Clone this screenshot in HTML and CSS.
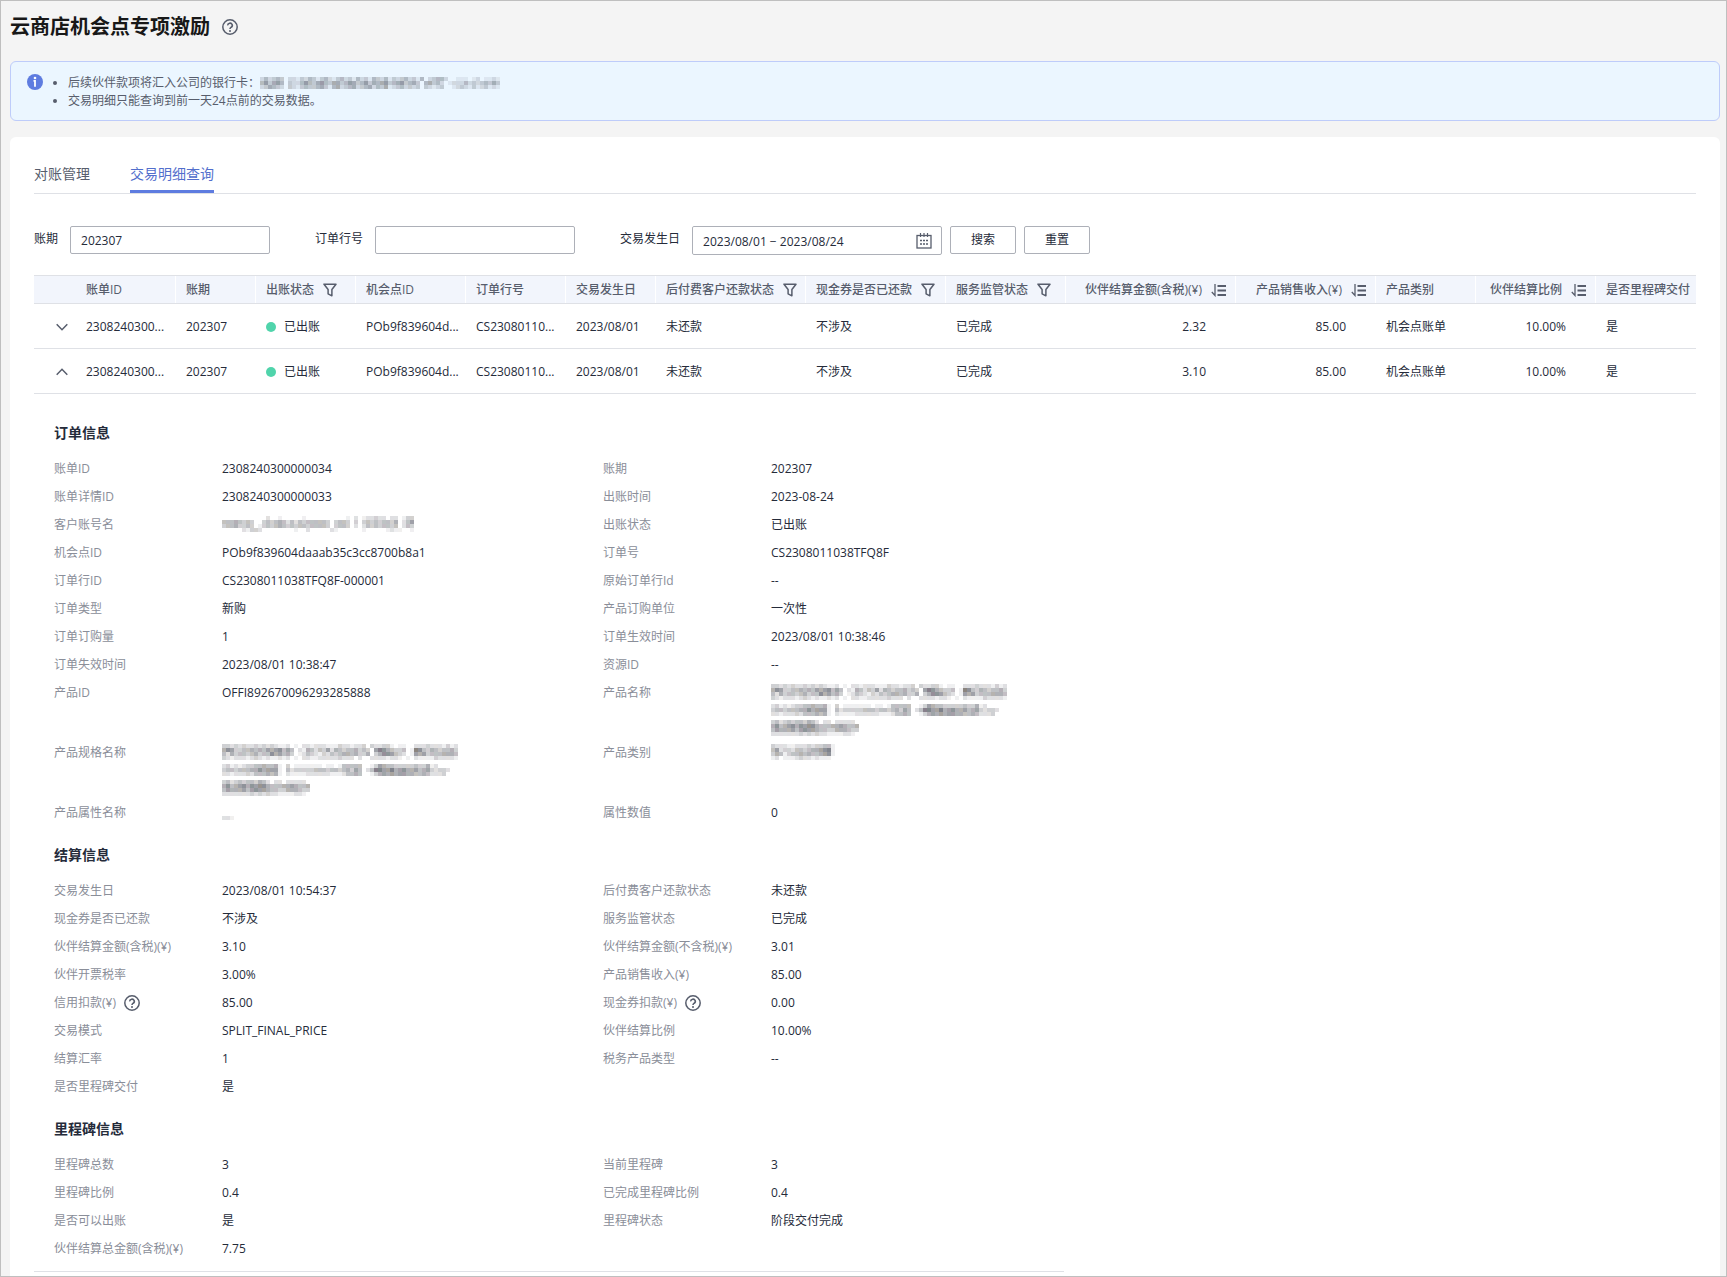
FILE: index.html
```html
<!DOCTYPE html>
<html lang="zh-CN">
<head>
<meta charset="utf-8">
<meta name="viewport" content="width=device-width, initial-scale=1">
<title>云商店机会点专项激励</title>
<link rel="stylesheet" href="styles.css">
</head>
<body>
<svg class="sprite" aria-hidden="true">
  <symbol id="i-help" viewBox="0 0 16 16"><circle cx="8" cy="8" r="7.2" fill="none" stroke="currentColor" stroke-width="1.5"/><path d="M5.7 6.400a2.300 2.200 0 1 1 3.500 1.800C8.300 8.800 8 9.100 8 10" fill="none" stroke="currentColor" stroke-width="1.600"/><circle cx="8" cy="12" r="1" fill="currentColor"/></symbol>
  <symbol id="i-filter" viewBox="0 0 14 14"><path d="M1 1.200h12L8.900 6.500v6.300L5.100 10.800V6.500z" fill="none" stroke="currentColor" stroke-width="1.500" stroke-linejoin="round"/></symbol>
  <symbol id="i-sort" viewBox="0 0 15 14"><path d="M4 1v11.500L.8 9" fill="none" stroke="currentColor" stroke-width="1.300"/><path d="M6.500 3H15M6.500 7.500H15M6.500 12H15" fill="none" stroke="currentColor" stroke-width="1.800"/></symbol>
  <symbol id="i-down" viewBox="0 0 12 12"><path d="M.7 3.200 6 8.700l5.300-5.500" fill="none" stroke="currentColor" stroke-width="1.500"/></symbol>
  <symbol id="i-up" viewBox="0 0 12 12"><path d="M.7 8.800 6 3.300l5.300 5.500" fill="none" stroke="currentColor" stroke-width="1.500"/></symbol>
</svg>
<main class="page">
  <header class="page-head">
    <h1>云商店机会点专项激励</h1>
    <button class="icon-btn" type="button" aria-label="帮助"><svg class="i16"><use href="#i-help"/></svg></button>
  </header>

  <section class="notice">
    <svg class="i16 notice-icon" viewBox="0 0 16 16"><circle cx="8" cy="8" r="8" fill="#5e7ce0"/><circle cx="8" cy="4" r="1.300" fill="#fff"/><path d="M6.500 6.800H8V12.800" fill="none" stroke="#fff" stroke-width="1.800"/></svg>
    <ul>
      <li>后续伙伴款项将汇入公司的银行卡：<svg class="mosaic" data-map="bank"></svg></li>
      <li>交易明细只能查询到前一天24点前的交易数据。</li>
    </ul>
  </section>

  <section class="card">
    <nav class="tabs">
      <a href="#reconcile">对账管理</a>
      <a href="#detail" class="active">交易明细查询</a>
    </nav>

    <form class="filters">
      <div class="field"><label for="period">账期</label><input id="period" type="text" value="202307"></div>
      <div class="field"><label for="line">订单行号</label><input id="line" type="text"></div>
      <div class="field"><label for="date">交易发生日</label>
        <div class="date-box"><input id="date" type="text" value="2023/08/01 − 2023/08/24">
          <svg class="i16" viewBox="0 0 16 16"><rect x="1" y="2.500" width="14" height="12.500" fill="none" stroke="currentColor" stroke-width="1.300"/><path d="M4.500 0v4M8 0v4M11.500 0v4" stroke="currentColor" stroke-width="1.200"/><path d="M4 7.500h2m1 0h2m1 0h2M4 11h2m1 0h2m1 0h2" stroke="currentColor" stroke-width="1.700"/></svg>
        </div>
      </div>
      <div class="actions"><button class="btn" type="button">搜索</button><button class="btn" type="button">重置</button></div>
    </form>

    <table class="bills">
      <colgroup><col class="c42"><col class="c100"><col class="c80"><col class="c100"><col class="c110"><col class="c100"><col class="c90"><col class="c150"><col class="c140"><col class="c120"><col class="c170"><col class="c140"><col class="c100"><col class="c120"><col class="c100"></colgroup>
      <thead>
        <tr>
          <td class="blank"></td>
          <th>账单ID</th><th>账期</th>
          <th><span>出账状态</span><svg class="i14"><use href="#i-filter"/></svg></th>
          <th>机会点ID</th><th>订单行号</th><th>交易发生日</th>
          <th><span>后付费客户还款状态</span><svg class="i14"><use href="#i-filter"/></svg></th>
          <th><span>现金券是否已还款</span><svg class="i14"><use href="#i-filter"/></svg></th>
          <th><span>服务监管状态</span><svg class="i14"><use href="#i-filter"/></svg></th>
          <th class="num"><span>伙伴结算金额(含税)(¥)</span><svg class="i15"><use href="#i-sort"/></svg></th>
          <th class="num"><span>产品销售收入(¥)</span><svg class="i15"><use href="#i-sort"/></svg></th>
          <th>产品类别</th>
          <th class="num"><span>伙伴结算比例</span><svg class="i15"><use href="#i-sort"/></svg></th>
          <th>是否里程碑交付</th>
        </tr>
      </thead>
      <tbody>
        <tr class="row">
          <td class="toggle"><button class="icon-btn" type="button" aria-label="展开"><svg class="i12"><use href="#i-down"/></svg></button></td>
          <td>2308240300...</td><td>202307</td><td><i class="dot"></i>已出账</td><td>POb9f839604d...</td><td>CS23080110...</td><td>2023/08/01</td><td>未还款</td><td>不涉及</td><td>已完成</td><td class="num">2.32</td><td class="num">85.00</td><td>机会点账单</td><td class="num">10.00%</td><td>是</td>
        </tr>
        <tr class="row">
          <td class="toggle"><button class="icon-btn" type="button" aria-label="收起"><svg class="i12"><use href="#i-up"/></svg></button></td>
          <td>2308240300...</td><td>202307</td><td><i class="dot"></i>已出账</td><td>POb9f839604d...</td><td>CS23080110...</td><td>2023/08/01</td><td>未还款</td><td>不涉及</td><td>已完成</td><td class="num">3.10</td><td class="num">85.00</td><td>机会点账单</td><td class="num">10.00%</td><td>是</td>
        </tr>
        <tr>
          <td class="detail" colspan="15">
            <h2>订单信息</h2>
            <dl>
              <dt>账单ID</dt><dd>2308240300000034</dd><dt>账期</dt><dd>202307</dd>
              <dt>账单详情ID</dt><dd>2308240300000033</dd><dt>出账时间</dt><dd>2023-08-24</dd>
              <dt>客户账号名</dt><dd><svg class="mosaic" data-map="account"></svg></dd><dt>出账状态</dt><dd>已出账</dd>
              <dt>机会点ID</dt><dd>POb9f839604daaab35c3cc8700b8a1</dd><dt>订单号</dt><dd>CS2308011038TFQ8F</dd>
              <dt>订单行ID</dt><dd>CS2308011038TFQ8F-000001</dd><dt>原始订单行Id</dt><dd>--</dd>
              <dt>订单类型</dt><dd>新购</dd><dt>产品订购单位</dt><dd>一次性</dd>
              <dt>订单订购量</dt><dd>1</dd><dt>订单生效时间</dt><dd>2023/08/01 10:38:46</dd>
              <dt>订单失效时间</dt><dd>2023/08/01 10:38:47</dd><dt>资源ID</dt><dd>--</dd>
              <dt>产品ID</dt><dd>OFFI892670096293285888</dd><dt>产品名称</dt><dd><svg class="mosaic" data-map="product"></svg></dd>
              <dt>产品规格名称</dt><dd><svg class="mosaic" data-map="product"></svg></dd><dt>产品类别</dt><dd><svg class="mosaic" data-map="category"></svg></dd>
              <dt>产品属性名称</dt><dd><svg class="mosaic" data-map="empty"></svg></dd><dt>属性数值</dt><dd>0</dd>
            </dl>
            <h2>结算信息</h2>
            <dl>
              <dt>交易发生日</dt><dd>2023/08/01 10:54:37</dd><dt>后付费客户还款状态</dt><dd>未还款</dd>
              <dt>现金券是否已还款</dt><dd>不涉及</dd><dt>服务监管状态</dt><dd>已完成</dd>
              <dt>伙伴结算金额(含税)(¥)</dt><dd>3.10</dd><dt>伙伴结算金额(不含税)(¥)</dt><dd>3.01</dd>
              <dt>伙伴开票税率</dt><dd>3.00%</dd><dt>产品销售收入(¥)</dt><dd>85.00</dd>
              <dt>信用扣款(¥)<button class="icon-btn" type="button" aria-label="信用扣款说明"><svg class="i16"><use href="#i-help"/></svg></button></dt><dd>85.00</dd><dt>现金券扣款(¥)<button class="icon-btn" type="button" aria-label="现金券扣款说明"><svg class="i16"><use href="#i-help"/></svg></button></dt><dd>0.00</dd>
              <dt>交易模式</dt><dd>SPLIT_FINAL_PRICE</dd><dt>伙伴结算比例</dt><dd>10.00%</dd>
              <dt>结算汇率</dt><dd>1</dd><dt>税务产品类型</dt><dd>--</dd>
              <dt>是否里程碑交付</dt><dd>是</dd>
            </dl>
            <h2>里程碑信息</h2>
            <dl>
              <dt>里程碑总数</dt><dd>3</dd><dt>当前里程碑</dt><dd>3</dd>
              <dt>里程碑比例</dt><dd>0.4</dd><dt>已完成里程碑比例</dt><dd>0.4</dd>
              <dt>是否可以出账</dt><dd>是</dd><dt>里程碑状态</dt><dd>阶段交付完成</dd>
              <dt>伙伴结算总金额(含税)(¥)</dt><dd>7.75</dd>
            </dl>
          </td>
        </tr>
      </tbody>
    </table>
    <hr class="end-line">
  </section>
</main>
<script src="mosaic.js"></script>
</body>
</html>
```
FILE: styles.css
```css
* { box-sizing: border-box; }

body {
  margin: 0;
  background: #f4f4f4;
  color: #252b3a;
  font: 12px/18px "Open Sans", "Noto Sans CJK SC", sans-serif;
}

h1, h2, ul, dl, dd { margin: 0; }
svg { display: block; flex: none; }
.sprite { display: none; }
button, input { font: inherit; color: inherit; }

.i12 { width: 12px; height: 12px; }
.i14 { width: 14px; height: 14px; }
.i15 { width: 15px; height: 14px; }
.i16 { width: 16px; height: 16px; }

.icon-btn {
  padding: 0;
  border: 0;
  background: none;
  color: #575d6c;
}

.page {
  display: flex;
  flex-direction: column;
  min-height: 100vh;
  padding: 0 6px 0 9px;
  border: 1px solid #bfbfbf;
}

.page-head {
  display: flex;
  align-items: center;
  gap: 12px;
  height: 60px;
  padding-bottom: 8px;
}

h1 {
  color: #181818;
  font-size: 20px;
  line-height: 28px;
}

.notice {
  display: flex;
  gap: 9px;
  height: 60px;
  padding: 12px 16px;
  border: 1px solid #beccfa;
  border-radius: 6px;
  background: #ebf6ff;
  color: #575d6c;
}

.notice ul { padding-left: 16px; }
.notice li::marker { font-size: 12px; }
.notice .mosaic { display: inline-block; vertical-align: -2px; }

.card {
  flex: 1;
  margin-top: 16px;
  padding: 20px 24px 4px;
  border-radius: 6px 6px 0 0;
  background: #fff;
}

.tabs {
  display: flex;
  gap: 40px;
  border-bottom: 1px solid #dfe1e6;
}

.tabs a {
  height: 36px;
  padding-top: 5px;
  color: #575d6c;
  font-size: 14px;
  line-height: 24px;
  text-decoration: none;
}

.tabs .active {
  border-bottom: 3px solid #5e7ce0;
  color: #526ecc;
}

.filters {
  display: flex;
  align-items: flex-start;
  margin-top: 32px;
}

.field { display: flex; gap: 12px; margin-right: 45px; }
.field:nth-child(3) { margin-right: 8px; }
.field label { line-height: 26px; }

input {
  width: 200px;
  height: 28px;
  padding: 0 10px;
  border: 1px solid #adb0b8;
  border-radius: 2px;
  background: #fff;
}

.date-box {
  display: flex;
  align-items: center;
  width: 250px;
  height: 29px;
  padding-right: 9px;
  border: 1px solid #adb0b8;
  border-radius: 2px;
  color: #575d6c;
}

.date-box input {
  flex: 1;
  min-width: 0;
  height: 27px;
  padding-top: 2px;
  border: 0;
  color: #252b3a;
}

.actions { display: flex; gap: 8px; }

.btn {
  width: 66px;
  height: 28px;
  padding: 0;
  border: 1px solid #adb0b8;
  border-radius: 2px;
  background: #fff;
}

.bills {
  width: 100%;
  margin-top: 20px;
  border-collapse: collapse;
  table-layout: fixed;
}

.c42 { width: 42px; }
.c80 { width: 80px; }
.c90 { width: 90px; }
.c100 { width: 100px; }
.c110 { width: 110px; }
.c120 { width: 120px; }
.c140 { width: 140px; }
.c150 { width: 150px; }
.c170 { width: 170px; }

.bills thead tr {
  height: 28px;
  border-top: 1px solid #dfe1e6;
  border-bottom: 1px solid #dfe1e6;
  background: #f2f5fc;
  color: #575d6c;
}

.bills th {
  padding: 0 0 0 10px;
  box-shadow: inset -1px 0 #fff;
  font-weight: 500;
  text-align: left;
  white-space: nowrap;
}

.bills th:last-child { box-shadow: none; }
.bills th svg { display: inline-block; margin-left: 9px; vertical-align: middle; }
.bills th.num { padding-right: 10px; text-align: right; }

.row { height: 45px; border-bottom: 1px solid #dfe1e6; }
.row td { padding: 2px 0 0 10px; white-space: nowrap; }
.row .num { padding-right: 30px; text-align: right; }
.row .toggle { padding-left: 22px; }
.toggle .icon-btn { display: block; }

.dot {
  display: inline-block;
  width: 10px;
  height: 10px;
  margin-right: 8px;
  border-radius: 50%;
  background: #50d4ab;
  vertical-align: -1px;
}

.detail { padding: 28px 20px 11px; }

h2 {
  font-size: 14px;
  line-height: 22px;
}

dl {
  display: grid;
  grid-template-columns: 168px minmax(0, 381px) 168px minmax(0, 1fr);
  grid-auto-rows: minmax(22px, auto);
  gap: 6px 0;
  padding: 14px 0 20px;
  line-height: 22px;
}

dl:last-child { padding-bottom: 0; }

dt {
  display: flex;
  align-items: center;
  gap: 8px;
  height: 22px;
  color: #8a8e99;
}

dd .mosaic { margin-top: 2px; }

.end-line {
  width: 62%;
  height: 1px;
  margin: 0;
  border: 0;
  background: #dfe1e6;
}
```
FILE: mosaic.js
```javascript
// Redacted values are drawn as 4px tiles; each digit is a tile's darkness, "." is clear.
const maps = {
  bank: [
    "242343.2213243134213423142314324132342314.23442..111.12.1121",
    "463564.322464356435534653463545634563453.45342.1222423234353",
    "235432.321343345314523452345243512342323.32123..123213123121"
  ],
  account: [
    "...........2..1.....1..........1.2.122322.22.133",
    "44454343..34345424243444443.3443.3.343434435.246",
    "34453343.134345434344344443.3443.2.243434434.243",
    ".....21332........1..2.....21......1.....1211..1"
  ],
  product: [
    "33232322323232112.1.2212221113221223.322331.11..22232221312",
    "576334454546567464.215424362543445343.68754334.187435434453",
    "425344345344756453.124321324345545335.35776432.165634445554",
    "32122212321211212.1.2211222223222.2..22221221.1.21111322221",
    "",
    "231212334454451.3.1111111.11.144444..13654433333433512",
    "344344455756661.4233333444344345364.248866856755645632332",
    "221222324445451.2111122222211124454..1356565665544542223.",
    "",
    "342343443542.22.22222",
    "5745675767754445565445",
    "4655564676654433555433",
    "222222232323221111221"
  ],
  category: [
    "3222112223233441",
    "4623324434556781",
    "3541344545445671",
    "12.111232212111."
  ],
  empty: ["", "", "", "221"]
};
const NS = "http://www.w3.org/2000/svg";

document.querySelectorAll(".mosaic").forEach(svg => {
  const rows = maps[svg.dataset.map];
  svg.setAttribute("width", 4 * Math.max(...rows.map(r => r.length)));
  svg.setAttribute("height", 4 * rows.length);
  rows.forEach((row, y) => [...row].forEach((c, x) => {
    if (c === ".") return;
    const tile = document.createElementNS(NS, "rect");
    const hue = [225, 220, 280, 200, 230, 30][(x * 7 + y * 5) % 6];
    tile.setAttribute("x", x * 4);
    tile.setAttribute("y", y * 4);
    tile.setAttribute("width", 4);
    tile.setAttribute("height", 4);
    tile.setAttribute("fill", `hsla(${hue}, 15%, 25%, ${c * 0.08})`);
    svg.append(tile);
  }));
});
```
